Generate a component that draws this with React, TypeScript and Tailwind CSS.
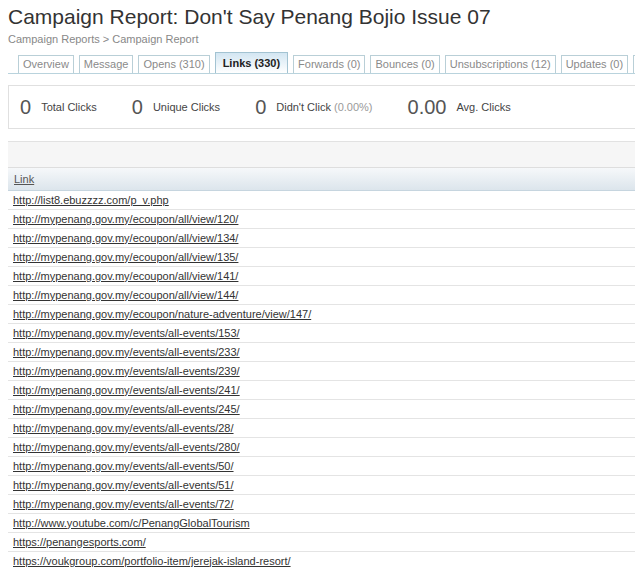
const TABS = [
  { label: "Overview" },
  { label: "Message" },
  { label: "Opens (310)" },
  { label: "Links (330)", active: true },
  { label: "Forwards (0)" },
  { label: "Bounces (0)" },
  { label: "Unsubscriptions (12)" },
  { label: "Updates (0)" },
  { label: "Recipients" },
];

const STATS = [
  { value: "0", label: "Total Clicks" },
  { value: "0", label: "Unique Clicks" },
  { value: "0", label: "Didn't Click", extra: "(0.00%)" },
  { value: "0.00", label: "Avg. Clicks" },
];

const LINKS = [
  "http://list8.ebuzzzz.com/p_v.php",
  "http://mypenang.gov.my/ecoupon/all/view/120/",
  "http://mypenang.gov.my/ecoupon/all/view/134/",
  "http://mypenang.gov.my/ecoupon/all/view/135/",
  "http://mypenang.gov.my/ecoupon/all/view/141/",
  "http://mypenang.gov.my/ecoupon/all/view/144/",
  "http://mypenang.gov.my/ecoupon/nature-adventure/view/147/",
  "http://mypenang.gov.my/events/all-events/153/",
  "http://mypenang.gov.my/events/all-events/233/",
  "http://mypenang.gov.my/events/all-events/239/",
  "http://mypenang.gov.my/events/all-events/241/",
  "http://mypenang.gov.my/events/all-events/245/",
  "http://mypenang.gov.my/events/all-events/28/",
  "http://mypenang.gov.my/events/all-events/280/",
  "http://mypenang.gov.my/events/all-events/50/",
  "http://mypenang.gov.my/events/all-events/51/",
  "http://mypenang.gov.my/events/all-events/72/",
  "http://www.youtube.com/c/PenangGlobalTourism",
  "https://penangesports.com/",
  "https://voukgroup.com/portfolio-item/jerejak-island-resort/",
];

export default function App() {
  return (
    <div className="h-[568px] w-full overflow-hidden bg-white font-['Liberation_Sans',Arial,sans-serif] text-[#333]">
      <div className="w-[700px] pl-2">
        <h1 className="pt-[5px] text-[21px] leading-6 text-[#333]">
          Campaign Report: Don't Say Penang Bojio Issue 07
        </h1>
        <div className="mt-[3px] text-[11px] leading-[14px] text-[#888]">
          Campaign Reports &gt; Campaign Report
        </div>

        {/* tabs */}
        <div className="mt-[6px] flex items-end gap-[5px] border-b border-[#b9d3dd] pl-[10px]">
          {TABS.map((t) =>
            t.active ? (
              <div
                key={t.label}
                className="flex h-[21px] items-center whitespace-nowrap border border-b-0 border-[#a3c3d2] bg-gradient-to-b from-[#d3e6f2] to-white px-[7px] text-[11px] font-bold text-[#222]"
              >
                {t.label}
              </div>
            ) : (
              <div
                key={t.label}
                className="flex h-[18px] items-center whitespace-nowrap border border-b-0 border-[#b9cfd7] bg-white px-[4px] text-[11px] text-[#8a8a8a]"
              >
                {t.label}
              </div>
            )
          )}
        </div>

        {/* stats */}
        <div className="mt-[11px] flex h-[44px] items-center gap-[35px] border border-[#e0e0e0] pl-[11px]">
          {STATS.map((s) => (
            <div key={s.label} className="flex items-center gap-[10px] whitespace-nowrap">
              <span className="text-[20px] leading-none text-[#555]">{s.value}</span>
              <span className="text-[11px] text-[#444]">
                {s.label}
                {s.extra && <span className="text-[#9a9a9a]"> {s.extra}</span>}
              </span>
            </div>
          ))}
        </div>

        {/* table */}
        <div className="mt-[12px]">
          <div className="h-[26px] border-t border-[#e2e2e2] bg-[#f6f6f6]" />
          <div className="flex h-[24px] items-center border-y border-t-[#dedede] border-b-[#c6d5df] bg-gradient-to-b from-[#f6f8fa] to-[#dce5ec] pl-[6px] text-[11px]">
            <span className="text-[#555] underline">Link</span>
          </div>
          {LINKS.map((l) => (
            <div
              key={l}
              className="flex h-[19px] items-center border-b border-[#e4e4e4] pl-[5px] text-[11px]"
            >
              <a href="#" className="text-[#333] underline">
                {l}
              </a>
            </div>
          ))}
        </div>
      </div>
    </div>
  );
}
